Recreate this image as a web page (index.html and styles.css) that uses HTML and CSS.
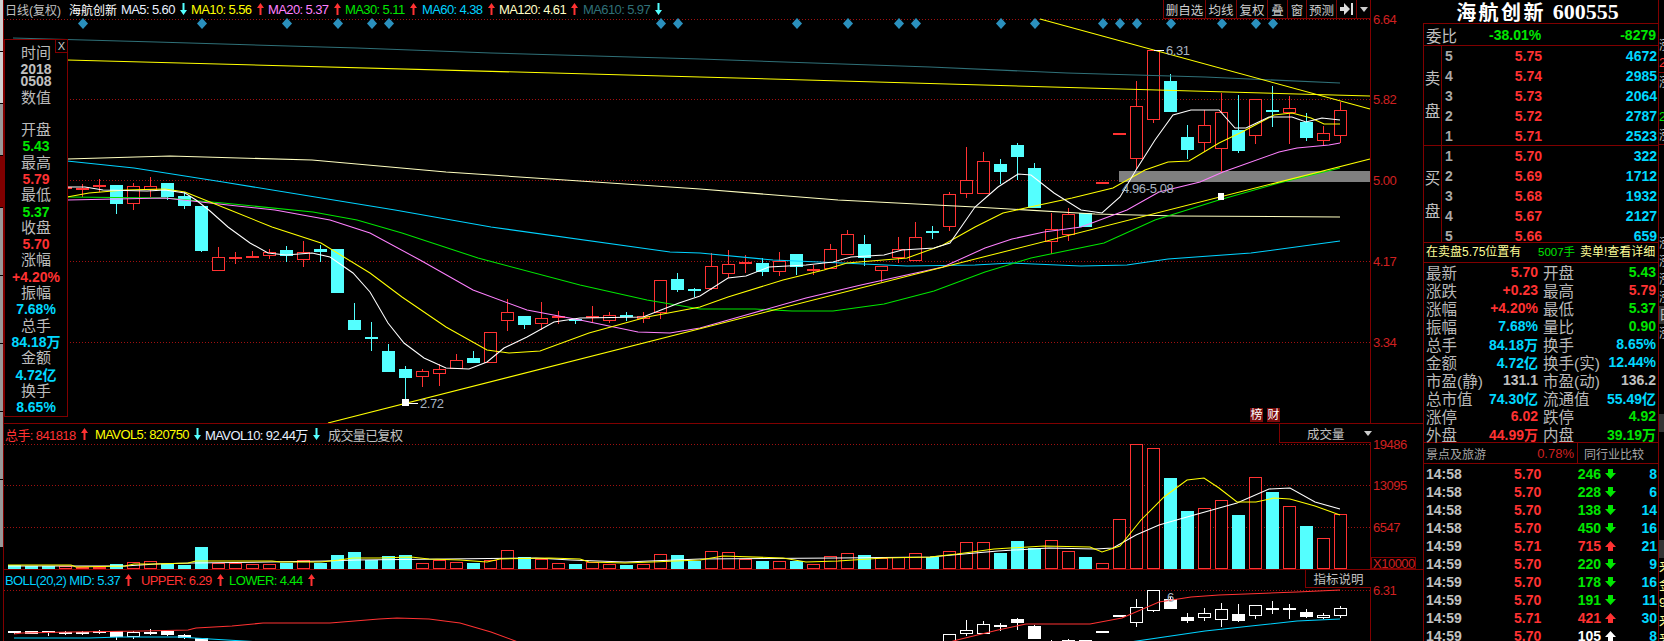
FILE: index.html
```html
<!DOCTYPE html>
<html lang="en">
<head>
    <meta charset="UTF-8">
    <title>海航创新 600555</title>
    <link rel="stylesheet" href="styles.css">
</head>
<body>
    <svg class="defs" width="0" height="0">
        <symbol id="up" viewBox="0 0 7 12"><path d="M3.5 0 7 5H4.5V12H2.5V5H0Z"/></symbol>
        <symbol id="down" viewBox="0 0 7 12"><path d="M3.5 12 7 7H4.5V0H2.5V7H0Z"/></symbol>
        <symbol id="tup" viewBox="0 0 11 10"><path d="M5.5 0 11 6H8V10H3V6H0Z"/></symbol>
        <symbol id="tdown" viewBox="0 0 11 10"><path d="M5.5 10 11 4H8V0H3V4H0Z"/></symbol>
    </svg>

    <div class="tabs">
        <i class="tab lt t1"></i><i class="tab lt t1"></i><i class="tab t1"></i><i class="tab on t1"></i>
        <i class="tab t2"></i><i class="tab t2"></i><i class="tab t2"></i><i class="tab t2"></i><i class="tab t2"></i>
    </div>

    <div class="main">
        <div class="pane pane-k">
            <svg id="kChart" class="plot" width="1419" height="423" viewBox="4 0 1419 423"></svg>

            <div class="legend legend-k">
                <span class="gray name1">日线(复权)</span>
                <span class="white name2">海航创新</span>
                <span class="item w1 c-white">MA5: 5.60<svg class="ar a-cyan"><use href="#down"/></svg></span>
                <span class="item w2 c-yellow">MA10: 5.56<svg class="ar a-red"><use href="#up"/></svg></span>
                <span class="item w2 c-pink">MA20: 5.37<svg class="ar a-red"><use href="#up"/></svg></span>
                <span class="item w2 c-green">MA30: 5.11<svg class="ar a-red"><use href="#up"/></svg></span>
                <span class="item w2 c-cyan">MA60: 4.38<svg class="ar a-red"><use href="#up"/></svg></span>
                <span class="item w3 c-cream">MA120: 4.61<svg class="ar a-red"><use href="#up"/></svg></span>
                <span class="item c-teal">MA610: 5.97<svg class="ar a-cyan"><use href="#down"/></svg></span>
            </div>

            <div class="toolbar">
                <span class="tb w42">删自选</span>
                <span class="tb w31">均线</span>
                <span class="tb w31">复权</span>
                <span class="tb w20">叠</span>
                <span class="tb w19">窗</span>
                <span class="tb w30">预测</span>
                <span class="tb w20"><svg width="14" height="12" viewBox="0 0 14 12"><path fill="#ddd" d="M0 4H4V0L10 6 4 12V8H0ZM11 0H13V12H11Z"/></svg></span>
                <span class="tb w14"><i class="tri"></i></span>
            </div>

            <div class="info">
                <span class="close">X</span>
                <div class="lb">时间</div>
                <div class="vl gray date-a">2018</div>
                <div class="vl gray">0508</div>
                <div class="lb date-b">数值</div>
                <div class="gap"></div>
                <div class="lb">开盘</div>
                <div class="vl green">5.43</div>
                <div class="lb">最高</div>
                <div class="vl red">5.79</div>
                <div class="lb">最低</div>
                <div class="vl green">5.37</div>
                <div class="lb">收盘</div>
                <div class="vl red">5.70</div>
                <div class="lb">涨幅</div>
                <div class="vl red">+4.20%</div>
                <div class="lb">振幅</div>
                <div class="vl cyan">7.68%</div>
                <div class="lb">总手</div>
                <div class="vl cyan">84.18万</div>
                <div class="lb">金额</div>
                <div class="vl cyan">4.72亿</div>
                <div class="lb">换手</div>
                <div class="vl cyan">8.65%</div>
            </div>

            <div class="badges"><span class="badge">榜</span><span class="badge">财</span></div>
        </div>

        <div class="pane pane-v">
            <svg id="volChart" class="plot" width="1419" height="145" viewBox="4 424 1419 145"></svg>
            <div class="legend legend-v">
                <span class="item v1 c-red">总手: 841818<svg class="ar a-red"><use href="#up"/></svg></span>
                <span class="item v2 c-yellow">MAVOL5: 820750<svg class="ar a-cyan"><use href="#down"/></svg></span>
                <span class="item v3 c-white">MAVOL10: 92.44万<svg class="ar a-cyan"><use href="#down"/></svg></span>
                <span class="gray">成交量已复权</span>
            </div>
            <div class="selectbox box-vol">成交量<i class="tri"></i></div>
        </div>

        <div class="pane pane-b">
            <svg id="bollChart" class="plot" width="1419" height="71" viewBox="4 570 1419 71"></svg>
            <div class="legend legend-b">
                <span class="item b1 c-cyan">BOLL(20,2) MID: 5.37<svg class="ar a-red"><use href="#up"/></svg></span>
                <span class="item b2 c-red">UPPER: 6.29<svg class="ar a-red"><use href="#up"/></svg></span>
                <span class="item c-green">LOWER: 4.44<svg class="ar a-red"><use href="#up"/></svg></span>
            </div>
            <div class="selectbox box-boll">指标说明</div>
        </div>
    </div>

    <div class="panel">
        <div class="title"><b class="t-name">海航创新</b><b class="t-code">600555</b></div>
        <div class="body">
            <div class="wb">
                <span class="lbl">委比</span>
                <b class="green wb-a">-38.01%</b>
                <b class="green wb-b">-8279</b>
            </div>

            <div class="book book-sell">
                <div class="side"><span>卖</span><span>盘</span></div>
                <div class="levels">
                    <div class="lvl"><b class="gray">5</b><b class="red">5.75</b><b class="cyan">4672</b></div>
                    <div class="lvl"><b class="gray">4</b><b class="red">5.74</b><b class="cyan">2985</b></div>
                    <div class="lvl"><b class="gray">3</b><b class="red">5.73</b><b class="cyan">2064</b></div>
                    <div class="lvl"><b class="gray">2</b><b class="red">5.72</b><b class="cyan">2787</b></div>
                    <div class="lvl"><b class="gray">1</b><b class="red">5.71</b><b class="cyan">2523</b></div>
                </div>
            </div>
            <div class="book book-buy">
                <div class="side"><span>买</span><span>盘</span></div>
                <div class="levels">
                    <div class="lvl"><b class="gray">1</b><b class="red">5.70</b><b class="cyan">322</b></div>
                    <div class="lvl"><b class="gray">2</b><b class="red">5.69</b><b class="cyan">1712</b></div>
                    <div class="lvl"><b class="gray">3</b><b class="red">5.68</b><b class="cyan">1932</b></div>
                    <div class="lvl"><b class="gray">4</b><b class="red">5.67</b><b class="cyan">2127</b></div>
                    <div class="lvl"><b class="gray">5</b><b class="red">5.66</b><b class="cyan">659</b></div>
                </div>
            </div>

            <div class="alert">
                <span class="pale al-a">在卖盘5.75位置有</span>
                <span class="green al-b">5007手</span>
                <span class="pale">卖单!查看详细</span>
            </div>

            <div class="quote">
                <div class="q"><span>最新</span><b class="red">5.70</b></div>
                <div class="q"><span>开盘</span><b class="green">5.43</b></div>
                <div class="q"><span>涨跌</span><b class="red">+0.23</b></div>
                <div class="q"><span>最高</span><b class="red">5.79</b></div>
                <div class="q"><span>涨幅</span><b class="red">+4.20%</b></div>
                <div class="q"><span>最低</span><b class="green">5.37</b></div>
                <div class="q"><span>振幅</span><b class="cyan">7.68%</b></div>
                <div class="q"><span>量比</span><b class="green">0.90</b></div>
                <div class="q"><span>总手</span><b class="cyan">84.18万</b></div>
                <div class="q"><span>换手</span><b class="cyan">8.65%</b></div>
                <div class="q"><span>金额</span><b class="cyan">4.72亿</b></div>
                <div class="q"><span>换手(实)</span><b class="cyan">12.44%</b></div>
                <div class="q"><span>市盈(静)</span><b class="gray">131.1</b></div>
                <div class="q"><span>市盈(动)</span><b class="gray">136.2</b></div>
                <div class="q"><span>总市值</span><b class="cyan">74.30亿</b></div>
                <div class="q"><span>流通值</span><b class="cyan">55.49亿</b></div>
                <div class="q"><span>涨停</span><b class="red">6.02</b></div>
                <div class="q"><span>跌停</span><b class="green">4.92</b></div>
                <div class="q"><span>外盘</span><b class="red">44.99万</b></div>
                <div class="q"><span>内盘</span><b class="green">39.19万</b></div>
            </div>

            <div class="sector">
                <div class="sec-a"><span>景点及旅游</span><span class="sec-pct">0.78%</span></div>
                <div class="sec-b">同行业比较</div>
            </div>

            <div class="ticks">
                <div class="tick"><b class="gray">14:58</b><b class="red">5.70</b><b class="green">246</b><svg class="tar a-green"><use href="#tdown"/></svg><b class="cyan">8</b></div>
                <div class="tick"><b class="gray">14:58</b><b class="red">5.70</b><b class="green">228</b><svg class="tar a-green"><use href="#tdown"/></svg><b class="cyan">6</b></div>
                <div class="tick"><b class="gray">14:58</b><b class="red">5.70</b><b class="green">138</b><svg class="tar a-green"><use href="#tdown"/></svg><b class="cyan">14</b></div>
                <div class="tick"><b class="gray">14:58</b><b class="red">5.70</b><b class="green">450</b><svg class="tar a-green"><use href="#tdown"/></svg><b class="cyan">16</b></div>
                <div class="tick"><b class="gray">14:59</b><b class="red">5.71</b><b class="red">715</b><svg class="tar a-red"><use href="#tup"/></svg><b class="cyan">21</b></div>
                <div class="tick"><b class="gray">14:59</b><b class="red">5.70</b><b class="green">220</b><svg class="tar a-green"><use href="#tdown"/></svg><b class="cyan">9</b></div>
                <div class="tick"><b class="gray">14:59</b><b class="red">5.70</b><b class="green">178</b><svg class="tar a-green"><use href="#tdown"/></svg><b class="cyan">16</b></div>
                <div class="tick"><b class="gray">14:59</b><b class="red">5.70</b><b class="green">191</b><svg class="tar a-green"><use href="#tdown"/></svg><b class="cyan">11</b></div>
                <div class="tick"><b class="gray">14:59</b><b class="red">5.71</b><b class="red">421</b><svg class="tar a-red"><use href="#tup"/></svg><b class="cyan">30</b></div>
                <div class="tick"><b class="gray">14:59</b><b class="red">5.70</b><b class="white">105</b><svg class="tar a-white"><use href="#tup"/></svg><b class="cyan">8</b></div>
            </div>
        </div>
    </div>

    <div class="edge">
        <span></span><span></span><span class="gray">涨</span><span class="red">2</span><span class="gray rule">涨</span><span></span><span class="green">2</span><span class="gray">涨</span>
        <span class="rule"></span><span></span><span></span><span></span><span></span>
        <span class="gray">涨</span><span class="gray">涨</span><span class="gray">涨</span><span class="gray">涨</span>
        <span class="gray boxed">日</span><span class="gray">涨</span><span></span><span></span><span></span><span></span>
        <span class="boxed"></span><span></span><span></span><span></span><span></span><span></span><span></span>
        <span class="boxed"></span><span class="pale">来</span><span class="pale">金</span><span class="pale">9</span><span class="pale">来</span><span class="pale">来</span>
    </div>

    <script src="chart.js"></script>
</body>
</html>
```

FILE: styles.css
```css
* { box-sizing: border-box; }
html, body { margin: 0; height: 641px; overflow: hidden; }
body { display: flex; background-color: #000; color: #c0c0c0; font-family: "Liberation Sans", "Noto Sans CJK SC", sans-serif; font-size: 13px; }
b { font-weight: bold; }
.defs { position: absolute; }

.gray { color: #c0c0c0; }
.white { color: #fff; }
.red { color: #ff3232; }
.green { color: #00e600; }
.cyan { color: #00d8ff; }
.pale { color: #ffff99; }

.c-white { color: #e8f0ff; }
.c-yellow { color: #ffff00; }
.c-pink { color: #ff80ff; }
.c-green { color: #00e600; }
.c-cyan { color: #00d2ff; }
.c-cream { color: #ffffc8; }
.c-teal { color: #2f7078; }
.c-red { color: #ff3232; }

.a-red { fill: #ff3232; }
.a-cyan { fill: #54ffff; }
.a-green { fill: #00e600; }
.a-white { fill: #fff; }

/* left tab strip */
.tabs { width: 4px; flex: none; border-right: 1px solid #800000; display: flex; flex-direction: column; }
.tab { display: block; margin-bottom: 1px; background-color: #999; }
.tab.t1 { height: 51px; }
.tab.t2 { height: 67px; }
.tab.lt { background-color: #d0d0d0; }
.tab.on { background-color: #800000; }

/* chart column */
.main { width: 1419px; flex: none; display: flex; flex-direction: column; }
.pane { position: relative; border-bottom: 1px solid #800000; }
.pane-k { height: 424px; }
.pane-v { height: 146px; }
.pane-b { height: 71px; border-bottom: 0; overflow: hidden; }
.plot { display: block; }

.legend { position: absolute; left: 1px; display: flex; align-items: center; height: 16px; white-space: nowrap; letter-spacing: -0.6px; }
.legend-k { top: 1px; }
.legend-v { top: 2px; }
.legend-b { top: 2px; }
.name1 { width: 64px; font-size: 12px; letter-spacing: 0; }
.name2 { width: 52px; font-size: 12px; color: #fff; letter-spacing: 0; }
.item { display: flex; align-items: center; }
.w1 { width: 70px; }
.w2 { width: 77px; }
.w3 { width: 84px; }
.v1 { width: 90px; }
.v2 { width: 110px; }
.v3 { width: 123px; }
.b1 { width: 136px; }
.b2 { width: 88px; }
.ar { width: 7px; height: 12px; margin-left: 5px; }

.toolbar { position: absolute; top: 0; right: 52px; height: 19px; display: flex; border-left: 1px solid #800000; border-bottom: 1px solid #800000; background-color: #000; }
.tb { display: flex; align-items: center; justify-content: center; border-right: 1px solid #800000; font-size: 12.5px; color: #ccc; white-space: nowrap; }
.w42 { width: 42px; }
.w31 { width: 31px; }
.w30 { width: 30px; }
.w20 { width: 20px; }
.w19 { width: 19px; }
.w14 { width: 14px; }
.tri { display: block; width: 0; height: 0; border: 4px solid transparent; border-top: 5px solid #ccc; border-bottom: 0; }

.info { position: absolute; left: 0; top: 39px; width: 64px; height: 378px; padding-top: 5px; background-color: #000; border: 1px solid #800000; text-align: center; }
.close { position: absolute; top: 0; right: 0; width: 12px; height: 13px; border: 1px solid #800000; border-top: 0; border-right: 0; font-size: 11px; line-height: 12px; color: #ccc; }
.lb { font-size: 15px; height: 16.3px; line-height: 16.3px; color: #bbb; }
.vl { font-size: 14px; font-weight: bold; height: 16.3px; line-height: 16.3px; white-space: nowrap; }
.info .vl.gray { height: 12.5px; line-height: 12.5px; }
.date-a { margin-top: 1.5px; }
.date-b { margin-top: 2px; }
.gap { height: 16px; }

.badges { position: absolute; left: 1246px; top: 408px; display: flex; gap: 4px; }
.badge { width: 13px; height: 14px; background-color: #7a0c0c; color: #fff; font-size: 12px; line-height: 14px; text-align: center; }

.selectbox { position: absolute; top: 0; right: 52px; background-color: #000; border-left: 1px solid #800000; border-bottom: 1px solid #800000; font-size: 12.5px; color: #c0c0c0; display: flex; align-items: center; white-space: nowrap; }
.box-vol { width: 92px; height: 19px; padding-left: 27px; gap: 19px; }
.box-boll { width: 66px; height: 18px; justify-content: center; }

/* right quote panel */
.panel { width: 235px; flex: none; display: flex; flex-direction: column; }
.title { height: 23px; display: flex; justify-content: center; align-items: center; gap: 7px; color: #fff; padding-right: 6px; }
.t-name { font-family: "Noto Sans CJK SC", sans-serif; font-size: 20px; letter-spacing: 2.4px; line-height: 23px; }
.t-code { font-family: "Liberation Serif", serif; font-size: 22px; line-height: 23px; }
.body { flex: 1; border-left: 1px solid #800000; border-top: 1px solid #800000; display: flex; flex-direction: column; }

.lbl { font-size: 15.5px; color: #c0c0c0; }
.wb { height: 22px; display: flex; align-items: center; padding: 0 2px; border-bottom: 1px solid #800000; font-size: 14px; }
.wb-a { margin-left: 32px; }
.wb-b { margin-left: auto; }

.book { display: flex; border-bottom: 1px solid #800000; }
.book-sell { height: 100px; }
.book-buy { height: 97px; overflow: hidden; }
.side { width: 18px; flex: none; border-right: 1px solid #800000; display: flex; flex-direction: column; align-items: center; gap: 17px; padding-top: 25px; font-size: 15.5px; line-height: 16px; }
.levels { flex: 1; }
.lvl { display: grid; grid-template-columns: 20px 77px 1fr; height: 20px; line-height: 20px; font-size: 14px; padding: 0 1px 0 3px; }
.lvl b:nth-child(2), .lvl b:nth-child(3) { text-align: right; }
.lvl b:nth-child(1) { color: #aaa; }

.alert { height: 20px; display: flex; align-items: center; padding-left: 2px; border-bottom: 1px solid #800000; font-size: 12px; line-height: 19px; white-space: nowrap; }
.al-a { width: 112px; }
.al-b { width: 42px; font-size: 11.5px; }

.quote { height: 180px; display: grid; grid-template-columns: 115px 119px; grid-auto-rows: 18px; border-bottom: 1px solid #800000; }
.q { display: flex; justify-content: space-between; align-items: center; padding: 0 1px 0 2px; font-size: 15.5px; white-space: nowrap; }
.q:nth-child(even) { padding: 0 2px 0 4px; }
.q span { color: #b8b8b8; }
.q b { font-size: 14px; }

.sector { height: 21px; display: flex; border-bottom: 1px solid #800000; font-size: 12px; color: #a8a8a8; }
.sec-a { width: 154px; display: flex; justify-content: space-between; align-items: center; padding: 0 3px 0 2px; border-right: 1px solid #800000; }
.sec-pct { color: #d02020; font-size: 13px; }
.sec-b { flex: 1; display: flex; justify-content: center; align-items: center; padding-right: 8px; }

.ticks { padding-top: 1px; }
.tick { display: grid; grid-template-columns: 88px 28px 59px 16px 1fr; height: 18px; line-height: 18px; font-size: 14px; padding: 0 1px 0 2px; align-items: center; }
.tick b:nth-of-type(3), .tick b:nth-of-type(4) { text-align: right; }
.tar { width: 11px; height: 10px; margin-left: 4px; }

/* cut-off neighbour window on the far right */
.edge { width: 6px; flex: none; border-left: 1px solid #800000; overflow: hidden; display: flex; flex-direction: column; }
.edge span { display: block; flex: none; height: 18px; line-height: 18px; font-size: 13px; white-space: nowrap; overflow: hidden; }
.edge .rule { border-top: 1px solid #800000; }
.edge .boxed { background-color: #333; }

/* svg parts */
.grid { stroke: #a01010; stroke-width: 1; stroke-dasharray: 1 2; fill: none; }
.axis-line { stroke: #800000; stroke-width: 1; }
.axis { font-size: 13px; letter-spacing: -0.5px; fill: #d02020; dominant-baseline: central; }
.note { font-size: 13px; letter-spacing: -0.4px; fill: #a8b4c0; dominant-baseline: central; }
.ln { fill: none; stroke-width: 1.05; }
.ln-white { stroke: #fff; }
.ln-yellow { stroke: #ffff00; }
.ln-pink { stroke: #ff80ff; }
.ln-green { stroke: #00e600; }
.ln-cyan { stroke: #00d2ff; }
.ln-cream { stroke: #ffffc0; }
.ln-teal { stroke: #2f7078; }
.ln-red { stroke: #ff3232; }
.up { fill: #000; stroke: #ff3232; shape-rendering: crispEdges; }
.dn { fill: #54ffff; stroke: #54ffff; shape-rendering: crispEdges; }
.wick-up { stroke: #ff3232; shape-rendering: crispEdges; }
.wick-dn { stroke: #54ffff; shape-rendering: crispEdges; }
.b-up { fill: #000; stroke: #fff; shape-rendering: crispEdges; }
.b-dn { fill: #fff; stroke: #fff; shape-rendering: crispEdges; }
.wick-b { stroke: #fff; shape-rendering: crispEdges; }
.diamond { fill: #2a90bd; }
.band { fill: #808080; }
.dot { fill: #fff; }
```

FILE: chart.js
```js
// candles: wick top, body top, body bottom, wick bottom, u(p) or d(own) - y in page pixels
const candles = [
    [182, 182, 190, 192, 'd'], [184, 184, 192, 194, 'd'], [184, 184, 190, 200, 'd'], [184, 187, 189, 195, 'u'],
    [184, 188, 189, 197, 'u'], [179, 185, 187, 192, 'u'], [185, 185, 204, 214, 'd'], [183, 186, 204, 210, 'u'],
    [177, 186, 190, 197, 'u'], [183, 183, 197, 200, 'd'], [192, 196, 206, 209, 'd'], [206, 206, 251, 252, 'd'],
    [247, 257, 271, 271, 'u'], [252, 257, 259, 264, 'u'], [251, 256, 258, 258, 'u'], [249, 252, 256, 259, 'u'],
    [246, 250, 256, 262, 'd'], [241, 252, 260, 267, 'u'], [245, 249, 252, 262, 'd'], [249, 249, 293, 293, 'd'],
    [303, 320, 330, 330, 'd'], [322, 337, 339, 351, 'd'], [344, 351, 372, 372, 'd'], [366, 369, 378, 403, 'd'],
    [369, 371, 377, 387, 'u'], [364, 369, 374, 386, 'u'], [354, 360, 369, 369, 'u'], [351, 358, 363, 363, 'd'],
    [332, 332, 363, 363, 'u'], [299, 312, 321, 331, 'u'], [316, 316, 325, 329, 'd'], [302, 318, 324, 330, 'u'],
    [311, 316, 318, 324, 'u'], [319, 319, 320, 324, 'd'], [306, 316, 318, 323, 'u'], [312, 315, 321, 323, 'u'],
    [312, 315, 317, 321, 'd'], [312, 316, 319, 323, 'u'], [280, 280, 313, 319, 'u'], [273, 279, 290, 292, 'd'],
    [288, 289, 290, 297, 'd'], [253, 266, 289, 290, 'u'], [250, 264, 274, 278, 'u'], [255, 262, 264, 273, 'u'],
    [258, 263, 272, 276, 'd'], [252, 261, 272, 276, 'u'], [254, 254, 267, 275, 'd'], [265, 269, 271, 275, 'u'],
    [244, 249, 269, 269, 'u'], [230, 234, 255, 255, 'u'], [235, 244, 258, 266, 'd'], [266, 266, 271, 282, 'u'],
    [237, 249, 258, 263, 'u'], [222, 237, 261, 261, 'u'], [226, 231, 233, 239, 'd'], [192, 194, 227, 231, 'u'],
    [147, 180, 194, 198, 'u'], [152, 161, 194, 194, 'u'], [159, 164, 172, 184, 'd'], [143, 145, 157, 180, 'd'],
    [163, 168, 208, 208, 'd'], [213, 229, 242, 254, 'u'], [208, 214, 235, 241, 'u'], [213, 213, 227, 227, 'd'],
    [182, 182, 183, 183, 'u'], [133, 133, 134, 134, 'u'], [81, 106, 159, 169, 'u'], [50, 50, 120, 123, 'u'],
    [74, 81, 112, 112, 'd'], [125, 137, 150, 159, 'd'], [110, 125, 143, 152, 'u'], [93, 112, 149, 172, 'u'],
    [95, 130, 151, 153, 'd'], [99, 99, 136, 144, 'u'], [86, 110, 111, 127, 'd'], [96, 108, 113, 144, 'u'],
    [113, 122, 138, 141, 'd'], [126, 133, 141, 146, 'u'], [102, 110, 136, 143, 'u']
];

const volTops = [565, 566, 566, 566, 567, 567, 564, 562, 561, 564, 565, 547, 563, 563, 564, 564, 563, 560, 563, 555,
    552, 560, 556, 555, 563, 560, 562, 563, 560, 550, 557, 559, 563, 564, 562, 564, 565, 564, 554, 555,
    561, 551, 552, 559, 561, 561, 561, 564, 556, 553, 555, 558, 557, 553, 557, 551, 542, 542, 553, 541,
    548, 540, 551, 557, 563, 519, 444, 448, 478, 511, 508, 500, 515, 477, 492, 506, 526, 538, 514];

const diamonds = [83, 202, 287, 338, 372, 389, 661, 678, 797, 848, 899, 916, 1001, 1035, 1103, 1120, 1137, 1171, 1222, 1256, 1273];

const lines = {
    teal: [[13, 38], [156, 42], [357, 48], [491, 53], [700, 59], [930, 67], [1067, 73], [1205, 77], [1340, 83]],
    cream: [[67, 159], [170, 156], [312, 160], [446, 172], [580, 181], [700, 189], [838, 200], [975, 207], [1095, 214], [1177, 216], [1340, 217]],
    cyan: [[67, 161], [134, 168], [223, 182], [395, 210], [491, 227], [670, 252], [700, 253], [773, 260], [842, 263], [907, 266], [975, 265], [1012, 263], [1081, 266], [1127, 265], [1168, 259], [1251, 253], [1340, 241]],
    green: [[67, 197], [165, 198], [223, 203], [313, 212], [357, 220], [402, 233], [478, 258], [580, 285], [647, 300], [700, 309], [755, 309], [792, 311], [833, 311], [884, 304], [934, 291], [985, 272], [1031, 258], [1104, 243], [1155, 220], [1219, 200], [1279, 183], [1340, 168]],
    pink: [[67, 200], [165, 198], [228, 205], [275, 210], [330, 220], [370, 233], [420, 260], [473, 290], [527, 310], [580, 320], [638, 332], [670, 333], [700, 328], [746, 315], [806, 298], [861, 285], [943, 267], [985, 248], [1012, 239], [1044, 232], [1081, 227], [1127, 210], [1159, 192], [1200, 182], [1223, 172], [1279, 152], [1297, 148], [1329, 145], [1340, 143]],
    yellow: [[67, 197], [89, 193], [125, 190], [165, 189], [185, 192], [230, 210], [272, 227], [321, 243], [370, 273], [402, 297], [446, 327], [487, 350], [509, 353], [540, 351], [589, 333], [647, 317], [700, 307], [728, 297], [783, 280], [824, 270], [847, 263], [907, 258], [943, 245], [975, 227], [1003, 213], [1030, 207], [1072, 198], [1113, 188], [1145, 170], [1168, 162], [1189, 161], [1219, 143], [1242, 132], [1274, 115], [1292, 113], [1311, 118], [1324, 124], [1340, 124]],
    white: [[67, 187], [85, 187], [103, 190], [147, 191], [165, 190], [185, 193], [196, 200], [210, 211], [228, 227], [250, 243], [268, 253], [286, 255], [312, 253], [330, 257], [353, 273], [370, 292], [388, 323], [404, 343], [424, 358], [446, 368], [469, 369], [487, 362], [504, 348], [527, 337], [554, 322], [580, 318], [643, 317], [661, 310], [679, 303], [700, 296], [728, 278], [746, 276], [769, 267], [806, 265], [833, 262], [851, 257], [884, 255], [902, 250], [934, 248], [950, 243], [975, 207], [998, 187], [1018, 174], [1031, 175], [1054, 193], [1081, 210], [1102, 213], [1120, 197], [1136, 170], [1155, 140], [1173, 115], [1191, 110], [1219, 110], [1235, 128], [1246, 128], [1269, 117], [1292, 117], [1306, 122], [1322, 118], [1340, 120]]
};

const volYellow = [[8, 565], [71, 565], [76, 567], [125, 566], [134, 564], [156, 564], [188, 563], [196, 561], [272, 561], [281, 562], [321, 562], [339, 560], [353, 558], [379, 558], [411, 557], [429, 559], [460, 560], [487, 562], [500, 559], [549, 558], [580, 559], [589, 562], [625, 563], [652, 562], [700, 560], [723, 556], [783, 558], [806, 562], [838, 561], [884, 558], [930, 557], [957, 554], [994, 549], [1044, 546], [1090, 547], [1102, 552], [1120, 546], [1141, 520], [1164, 497], [1187, 480], [1204, 478], [1219, 488], [1237, 502], [1256, 502], [1274, 498], [1290, 499], [1315, 506], [1340, 515]];
const volWhite = [[8, 566], [125, 566], [156, 564], [192, 563], [268, 562], [326, 561], [357, 560], [446, 559], [536, 558], [571, 560], [625, 562], [700, 559], [838, 558], [930, 557], [975, 553], [998, 551], [1049, 548], [1095, 549], [1113, 548], [1136, 535], [1159, 525], [1187, 517], [1237, 503], [1269, 489], [1290, 488], [1315, 502], [1340, 509]];
const bollUpper = [[14, 634], [22, 633], [71, 632], [143, 631], [188, 630], [196, 628], [232, 626], [263, 623], [330, 623], [379, 619], [397, 618], [429, 619], [460, 623], [491, 632], [518, 642], [950, 642], [957, 640], [998, 630], [1026, 624], [1090, 624], [1122, 618], [1159, 602], [1191, 597], [1219, 595], [1297, 592], [1340, 590]];
const bollLower = [[14, 638], [89, 638], [120, 637], [179, 637], [210, 639], [261, 642], [1130, 642], [1205, 631], [1251, 626], [1297, 621], [1340, 619]];

const candleX = i => 8 + 17 * i;

function poly(points, cls) {
    return `<polyline class="ln ln-${cls}" points="${points.map(p => p.join(',')).join(' ')}"/>`;
}

function grid(y) {
    return `<line class="grid" x1="4" x2="1370" y1="${y}" y2="${y}"/>`;
}

function axisLabel(y, text) {
    return `<text class="axis" x="1373" y="${y}">${text}</text>`;
}

function axisLine(y1, y2) {
    return `<line class="axis-line" x1="1370.5" x2="1370.5" y1="${y1}" y2="${y2}"/>`;
}

// main candle chart
let k = '';
[19.5, 99.5, 180.5, 261.5, 342.5].forEach(y => { k += grid(y); });
k += axisLine(0, 423);
[[19.5, '6.64'], [99.5, '5.82'], [180.5, '5.00'], [261.5, '4.17'], [342.5, '3.34']].forEach(a => { k += axisLabel(a[0], a[1]); });
diamonds.forEach(x => {
    k += `<polygon class="diamond" points="${x},18 ${x + 5},23.5 ${x},29 ${x - 5},23.5"/>`;
});
k += `<rect class="band" x="1119" y="171" width="251" height="11"/>`;
candles.forEach((c, i) => {
    const x = candleX(i);
    const kind = c[4] === 'u' ? 'up' : 'dn';
    k += `<line class="wick-${kind}" x1="${x + 6.5}" x2="${x + 6.5}" y1="${c[0]}" y2="${c[3]}"/>`;
    k += `<rect class="${kind}" x="${x + 0.5}" y="${c[1] + 0.5}" width="12" height="${Math.max(c[2] - c[1] - 1, 1)}"/>`;
});
k += poly(lines.teal, 'teal') + poly(lines.cream, 'cream') + poly(lines.cyan, 'cyan') + poly(lines.green, 'green');
k += poly(lines.pink, 'pink') + poly(lines.yellow, 'yellow') + poly(lines.white, 'white');
k += `<polyline class="ln ln-yellow" points="67,60 700,77 1370,96"/>`;
k += `<polyline class="ln ln-yellow" points="1040,19 1370,109"/>`;
k += `<polyline class="ln ln-yellow" points="328,423 1370,159"/>`;
k += `<rect class="dot" x="402" y="399" width="7" height="7"/><rect class="dot" x="1218" y="193" width="6" height="7"/>`;
k += `<line class="wick-b" x1="409" x2="418" y1="403" y2="403"/><line class="wick-b" x1="1154" x2="1164" y1="50" y2="50"/>`;
k += `<text class="note" x="420" y="403">2.72</text><text class="note" x="1166" y="50">6.31</text><text class="note" x="1122" y="188">4.96-5.08</text>`;
document.getElementById('kChart').innerHTML = k;

// volume bars
let v = '';
[444.5, 485.5, 527.5].forEach(y => { v += grid(y); });
v += axisLine(424, 569);
[[444.5, '19486'], [485.5, '13095'], [527.5, '6547']].forEach(a => { v += axisLabel(a[0], a[1]); });
v += `<rect x="1371.5" y="557.5" width="44" height="11" fill="none" stroke="#800000"/>`;
v += `<text class="axis" x="1373" y="563">X10000</text>`;
volTops.forEach((top, i) => {
    const kind = candles[i][4] === 'u' ? 'up' : 'dn';
    v += `<rect class="${kind}" x="${candleX(i) + 0.5}" y="${top + 0.5}" width="12" height="${568 - top}"/>`;
});
v += poly(volWhite, 'white') + poly(volYellow, 'yellow');
document.getElementById('volChart').innerHTML = v;

// boll panel reuses the candles at a smaller scale
const bollY = y => Math.round(607 + (y - 106) * 0.31);
let b = grid(590.5) + axisLine(570, 641) + axisLabel(590.5, '6.31');
candles.forEach((c, i) => {
    const x = candleX(i);
    const top = bollY(c[1]);
    const bottom = bollY(c[2]);
    b += `<line class="wick-b" x1="${x + 6.5}" x2="${x + 6.5}" y1="${bollY(c[0])}" y2="${bollY(c[3])}"/>`;
    b += `<rect class="${c[4] === 'u' ? 'b-up' : 'b-dn'}" x="${x + 0.5}" y="${top + 0.5}" width="12" height="${Math.max(bottom - top - 1, 1)}"/>`;
});
b += poly(bollUpper, 'red') + poly(bollLower, 'cyan');
b += `<text class="note" x="1167" y="597">6</text>`;
document.getElementById('bollChart').innerHTML = b;
```
